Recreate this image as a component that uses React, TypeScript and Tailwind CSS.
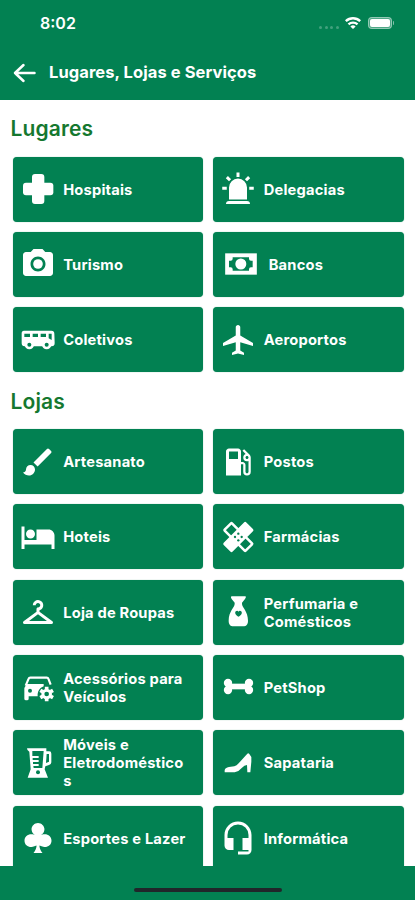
import type { ReactNode } from "react";
import { MdBrush, MdCameraAlt, MdCheckroom, MdLocalAirport, MdLocalGasStation, MdLocalHotel } from "react-icons/md";

const GREEN = "#028152";

function Glyph({ d }: { d: string }) {
  return (
    <svg viewBox="0 0 24 24" className="size-9" fill="currentColor">
      <path d={d} />
    </svg>
  );
}

function Drawing({ children }: { children: ReactNode }) {
  return (
    <svg viewBox="0 0 108 108" className="size-9 overflow-visible" fill="currentColor">
      {children}
    </svg>
  );
}

const Hospital = () => (
  <Drawing>
    <rect x="36" y="9" width="37" height="90" rx="9" />
    <rect x="9" y="35" width="91" height="38" rx="9" />
  </Drawing>
);

const Siren = () => (
  <Glyph d="M6,6.9L3.87,4.78L5.28,3.37L7.4,5.5L6,6.9M13,1V4H11V1H13M20.13,4.78L18,6.9L16.6,5.5L18.72,3.37L20.13,4.78M4.5,10.5V12.5H1.5V10.5H4.5M19.5,10.5H22.5V12.5H19.5V10.5M6,20H18A2,2 0 0,1 20,22H4A2,2 0 0,1 6,20M12,5A6,6 0 0,1 18,11V19H6V11A6,6 0 0,1 12,5Z" />
);

const Banknote = () => (
  <Drawing>
    <path d="M15.500 22h95v64h-95z" />
    <path d="M38 34h49v4a6 6 0 0 0 6 6h5v20h-5a6 6 0 0 0-6 6v4H38v-4a6 6 0 0 0-6-6h-5V44h5a6 6 0 0 0 6-6z" fill={GREEN} />
    <circle cx="62.500" cy="54" r="16.500" />
  </Drawing>
);

const Bus = () => (
  <Drawing>
    <path d="M12 26h82q9 0 9 9l1 28q0 10-9 10H14q-9 0-9-9V34q0-8 7-8z" />
    <circle cx="28" cy="68" r="14" />
    <circle cx="80" cy="68" r="14" />
    <g fill={GREEN}>
      <path d="M13 35h17v10H13zM38 35h16v10H38zM62 35h16v10H62zM86 35h9v19l-9-5z" />
      <circle cx="28" cy="68" r="6" />
      <circle cx="80" cy="68" r="6" />
    </g>
  </Drawing>
);

const Bandages = () => (
  <Drawing>
    <g transform="rotate(45 55 54)">
      <rect x="10.500" y="38.500" width="89" height="31" rx="2" fill="none" stroke="currentColor" strokeWidth="7.500" />
    </g>
    <g transform="rotate(-45 55 54)">
      <rect x="7" y="35" width="96" height="38" rx="5" />
    </g>
    <g fill={GREEN}>
      <circle cx="55" cy="44" r="3.500" />
      <circle cx="55" cy="64" r="3.500" />
      <circle cx="45" cy="54" r="3.500" />
      <circle cx="65" cy="54" r="3.500" />
    </g>
  </Drawing>
);

const Perfume = () => (
  <Drawing>
    <path d="M34 7h43q2 4-2 8l-9 11v4c0 10 18 22 18 50 0 12-6 17-14 17H40c-8 0-14-5-14-17 0-28 18-40 18-50v-4l-9-11q-4-4-1-8z" />
    <path d="M55.500 68c-5-3-10-7-10-12 0-6 8-8 10-3 2-5 10-3 10 3 0 5-5 9-10 12z" fill={GREEN} />
  </Drawing>
);

const CarCog = () => (
  <Drawing>
    <path d="M17 50l9-21q1-3 5-3h49q4 0 5 3l7 18" fill="none" stroke="currentColor" strokeWidth="6.500" />
    <path d="M20 45h51v7c-12 5-19 14-18 30H26v7q0 5-5 5h-3q-5 0-5-5V57z" />
    <circle cx="30" cy="65" r="6" fill={GREEN} />
    <circle cx="80" cy="75" r="11.500" fill="none" stroke="currentColor" strokeWidth="9" />
    <g stroke="currentColor" strokeWidth="11">
      <path d="M80 53v8M80 89v8" />
      <path d="M80 53v8M80 89v8" transform="rotate(60 80 75)" />
      <path d="M80 53v8M80 89v8" transform="rotate(120 80 75)" />
    </g>
  </Drawing>
);

const Blender = () => (
  <Drawing>
    <path d="M21 10h58v9h9q6 0 6 7v25q0 7-7 9l-11 4-2 9 10 25H23l9-25-4-53q-7-2-7-10z" />
    <g fill={GREEN}>
      <path d="M37 18h34l-4 51H41l-1-6h16v-6H39v-6h17v-6H38v-6h18v-6H37z" />
      <path d="M80 27h7v23l-9 4z" />
      <circle cx="54" cy="82" r="6" />
    </g>
  </Drawing>
);

const Bone = () => (
  <Drawing>
    <circle cx="24" cy="42" r="12.500" />
    <circle cx="24" cy="63" r="12.500" />
    <circle cx="87" cy="42" r="12.500" />
    <circle cx="87" cy="63" r="12.500" />
    <path d="M22 44h66v17H22z" />
  </Drawing>
);

const HeelShoe = () => (
  <Drawing>
    <path d="M14 82v-6q1-8 13-10l16-2q7-2 13-9l26-29q3-3 6 1l6 9v14l-3 32h-9l-1-22q-8 1-15 8-10 12-22 14z" />
  </Drawing>
);

const Club = () => (
  <Glyph d="M12,2C14.300,2 16.300,4 16.300,6.200C16.210,8.770 14.340,9.830 14.040,10C15.040,9.500 16.500,9.500 16.500,9.500C19,9.500 21,11.300 21,13.800C21,16.300 19,18 16.500,18C16.500,18 15,18 13,17C13,17 12.700,19 15,22H9C11.300,19 11,17 11,17C9,18 7.500,18 7.500,18C5,18 3,16.300 3,13.800C3,11.300 5,9.500 7.500,9.500C7.500,9.500 8.960,9.500 9.960,10C9.660,9.830 7.790,8.770 7.700,6.200C7.700,4 9.700,2 12,2Z" />
);

const Headset = () => (
  <Glyph d="M12,1C7,1 3,5 3,10V17A3,3 0 0,0 6,20H9V12H5V10A7,7 0 0,1 12,3A7,7 0 0,1 19,10V12H15V20H19V21H12V23H18A3,3 0 0,0 21,20V10C21,5 16.970,1 12,1Z" />
);

type Item = { label: string; icon: ReactNode; wide?: boolean };

const places: Item[] = [
  { label: "Hospitais", icon: <Hospital /> },
  { label: "Delegacias", icon: <Siren /> },
  { label: "Turismo", icon: <MdCameraAlt className="size-9" /> },
  { label: "Bancos", icon: <Banknote />, wide: true },
  { label: "Coletivos", icon: <Bus /> },
  { label: "Aeroportos", icon: <MdLocalAirport className="size-9" /> },
];

const shops: Item[] = [
  { label: "Artesanato", icon: <MdBrush className="size-9" /> },
  { label: "Postos", icon: <MdLocalGasStation className="size-9" /> },
  { label: "Hoteis", icon: <MdLocalHotel className="size-9" /> },
  { label: "Farmácias", icon: <Bandages /> },
  { label: "Loja de Roupas", icon: <MdCheckroom className="size-9" /> },
  { label: "Perfumaria e Comésticos", icon: <Perfume /> },
  { label: "Acessórios para Veículos", icon: <CarCog /> },
  { label: "PetShop", icon: <Bone /> },
  { label: "Móveis e Eletrodomésticos", icon: <Blender /> },
  { label: "Sapataria", icon: <HeelShoe /> },
  { label: "Esportes e Lazer", icon: <Club /> },
  { label: "Informática", icon: <Headset /> },
];

function Section({ title, items }: { title: string; items: Item[] }) {
  return (
    <section>
      <h2 className="h-[57px] pt-[14.500px] pl-[10.500px] text-[21px] leading-[30px] font-semibold tracking-[0.150px] text-[#15782f]">{title}</h2>
      <div className="grid grid-cols-2 gap-x-[10px] gap-y-[10.300px] pr-[11.500px] pl-[12.500px]">
        {items.map(({ label, icon, wide }) => (
          <div key={label} className="flex h-[65px] items-center rounded-[4px] bg-[#028152] pl-[7.200px] text-white shadow-[0_0_1px_rgba(2,129,82,0.6)]">
            <span className="shrink-0">{icon}</span>
            <span className={`${wide ? "ml-[12.500px]" : "ml-[7.500px]"} w-[124px] pt-px text-[14.700px] leading-[18px] font-bold tracking-[0.190px] wrap-anywhere`}>{label}</span>
          </div>
        ))}
      </div>
    </section>
  );
}

export default function App() {
  return (
    <div className="flex h-[900px] w-[415px] flex-col overflow-hidden bg-white font-['Inter','Liberation_Sans',sans-serif]">
      <header className="h-[99.500px] shrink-0 bg-[#028152] text-white">
        <div className="flex h-[46px] items-center justify-between pr-[21px] pl-10">
          <span className="text-[16px] font-semibold">8:02</span>
          <div className="flex items-center">
            <div className="mt-2 mr-[6px] flex gap-[2.500px] opacity-25">
              <i className="size-[3px] rounded-full bg-white" />
              <i className="size-[3px] rounded-full bg-white" />
              <i className="size-[3px] rounded-full bg-white" />
              <i className="size-[3px] rounded-full bg-white" />
            </div>
            <svg viewBox="0 0 16 12" className="mr-[7px] h-3 w-4" fill="none" stroke="currentColor" strokeWidth="2.400">
              <path d="M.8 4.200a10.400 10.400 0 0 1 14.400 0M3.500 7.400a6.500 6.500 0 0 1 9 0" />
              <path d="M8 12L5.400 9.400a3.800 3.800 0 0 1 5.200 0z" fill="currentColor" stroke="none" />
            </svg>
            <div className="h-3 w-6 rounded-[4px] border border-white/40 bg-white/30 p-px">
              <div className="h-full rounded-[2px] bg-white" />
            </div>
            <i className="ml-px h-1 w-[1.500px] rounded-r bg-white/50" />
          </div>
        </div>
        <div className="flex h-[53px] items-center pl-[13px]">
          <svg viewBox="0 0 24 20" className="h-5 w-6" fill="none" stroke="currentColor" strokeWidth="2.500" strokeLinecap="round" strokeLinejoin="round">
            <path d="M21.500 10H2M10.500 2L2 10l8.500 8" />
          </svg>
          <h1 className="ml-3 text-[16.500px] font-bold tracking-[0.080px]">Lugares, Lojas e Serviços</h1>
        </div>
      </header>
      <main className="min-h-0 flex-1 overflow-hidden">
        <Section title="Lugares" items={places} />
        <Section title="Lojas" items={shops} />
      </main>
      <footer className="flex h-[34px] shrink-0 justify-center bg-[#028152] pt-[22px]">
        <div className="h-[4px] w-[148px] rounded-full bg-[#20262a]" />
      </footer>
    </div>
  );
}
